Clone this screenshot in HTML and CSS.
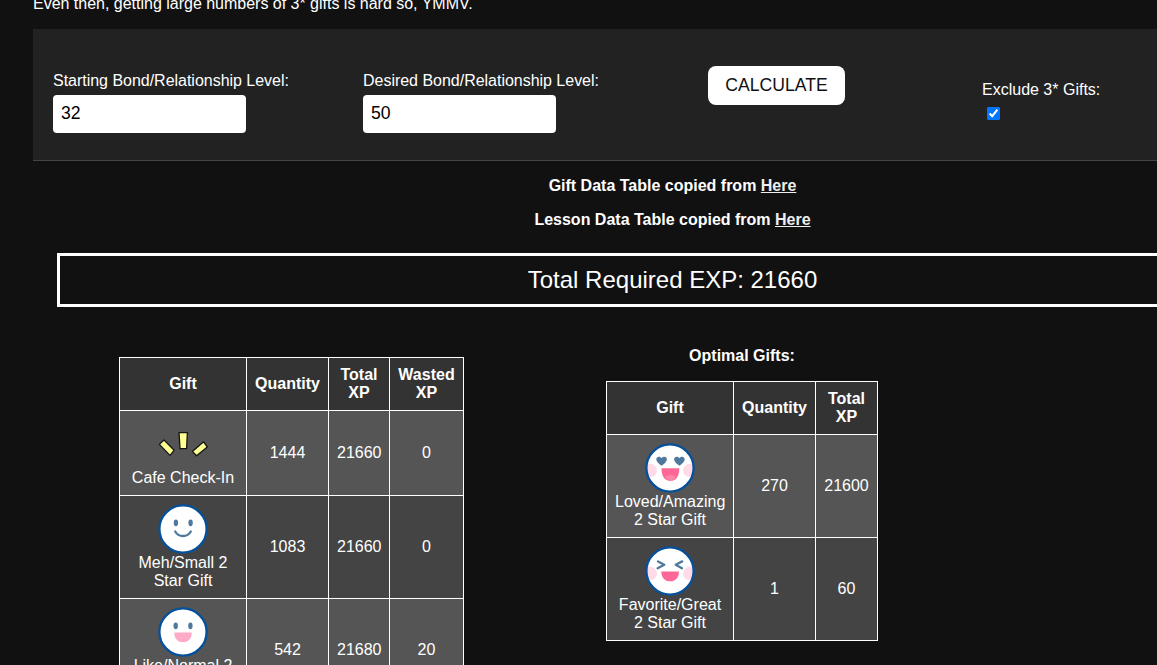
FILE: index.html
```html
<!DOCTYPE html>
<html lang="en">
<head>
<meta charset="utf-8">
<title>Bond Calculator</title>
<link rel="stylesheet" href="styles.css">
</head>
<body>
<main class="page">
  <p class="intro">Even then, getting large numbers of 3* gifts is hard so, YMMV.</p>
  <form class="controls">
    <label class="field">Starting Bond/Relationship Level:
      <input class="level" type="text" value="32">
    </label>
    <label class="field">Desired Bond/Relationship Level:
      <input class="level" type="text" value="50">
    </label>
    <button class="calculate" type="button">CALCULATE</button>
    <label class="exclude">Exclude 3* Gifts:
      <input class="check" type="checkbox" checked>
    </label>
  </form>
  <div class="sources">
    <p>Gift Data Table copied from <a href="#">Here</a></p>
    <p>Lesson Data Table copied from <a href="#">Here</a></p>
  </div>
  <div class="total">Total Required EXP: 21660</div>
  <div class="results">
    <table class="gifts gifts-all">
      <colgroup><col class="c-gift"><col class="c-qty"><col class="c-xp"><col class="c-waste"></colgroup>
      <thead><tr><th>Gift</th><th>Quantity</th><th>Total XP</th><th>Wasted XP</th></tr></thead>
      <tbody>
        <tr>
          <td><svg class="icon" viewBox="0 0 50 50"><g fill="#ffff94" stroke="#151515" stroke-width="1.3" stroke-linejoin="round"><path d="M1.4 25.4 6 21 16.2 31.2 12 36.4Z"/><path d="M21 13.6H29.4L28.6 29.6H22Z"/><path d="M34.4 32.4 45.6 22.8 49.3 28 38.6 36.8Z"/></g></svg>Cafe Check-In</td>
          <td>1444</td><td>21660</td><td>0</td>
        </tr>
        <tr>
          <td><svg class="icon" viewBox="0 0 50 50"><circle class="face" cx="25" cy="25" r="23.6"/><g class="eye"><ellipse cx="17.9" cy="18.8" rx="2.2" ry="3.4"/><ellipse cx="32.6" cy="18.8" rx="2.2" ry="3.4"/></g><path class="line" d="M17.2 27.5C20.5 33.5 29.5 33.5 32.8 27.5"/></svg>Meh/Small 2 Star Gift</td>
          <td>1083</td><td>21660</td><td>0</td>
        </tr>
        <tr>
          <td><svg class="icon" viewBox="0 0 50 50"><circle class="face" cx="25" cy="25" r="23.6"/><g class="eye"><ellipse cx="17.7" cy="18.8" rx="2.2" ry="3.4"/><ellipse cx="32.4" cy="18.8" rx="2.2" ry="3.4"/></g><path fill="#ffaac6" d="M16.3 25.5H33.7C33.7 31.5 30.5 35.2 25 35.2S16.3 31.5 16.3 25.5Z"/></svg>Like/Normal 2 Star Gift</td>
          <td>542</td><td>21680</td><td>20</td>
        </tr>
      </tbody>
    </table>
    <section class="optimal">
      <h2 class="heading">Optimal Gifts:</h2>
      <table class="gifts gifts-best">
        <colgroup><col class="c-gift"><col class="c-qty"><col class="c-xp2"></colgroup>
        <thead><tr><th>Gift</th><th>Quantity</th><th>Total XP</th></tr></thead>
        <tbody>
          <tr>
            <td><svg class="icon" viewBox="0 0 50 50"><circle cx="25" cy="25" r="23.6" fill="#fff"/><g class="cheek"><path d="M2.5 20.6C14.7 19.5 14.7 34.5 4.5 34.2Q1 27 2.5 20.6Z"/><path d="M47.5 20.6C35.3 19.5 35.3 34.5 45.5 34.2Q49 27 47.5 20.6Z"/></g><circle class="face rim" cx="25" cy="25" r="23.6"/><g class="eye"><path d="M16.6 22.8C13 20 11.3 18.4 11.3 16.2C11.3 13.2 15.3 12.8 16.6 15.2C17.9 12.8 21.9 13.2 21.9 16.2C21.9 18.4 20.2 20 16.6 22.8Z"/><path d="M34.4 22.8C30.8 20 29.1 18.4 29.1 16.2C29.1 13.2 33.1 12.8 34.4 15.2C35.7 12.8 39.7 13.2 39.7 16.2C39.7 18.4 38 20 34.4 22.8Z"/></g><path class="mouth" d="M16.5 25.2H34.3C34.3 33 31.3 37.8 25.4 37.8S16.5 33 16.5 25.2Z"/><path fill="#ff85ab" d="M20.3 34C22 31.6 28.8 31.6 30.5 34C28 38.7 22.8 38.7 20.3 34Z"/></svg>Loved/Amazing 2 Star Gift</td>
            <td>270</td><td>21600</td>
          </tr>
          <tr>
            <td><svg class="icon" viewBox="0 0 50 50"><circle cx="25" cy="25" r="23.6" fill="#fff"/><g class="cheek"><path d="M2.5 20.6C14.7 19.5 14.7 34.5 4.5 34.2Q1 27 2.5 20.6Z"/><path d="M47.5 20.6C35.3 19.5 35.3 34.5 45.5 34.2Q49 27 47.5 20.6Z"/></g><circle class="face rim" cx="25" cy="25" r="23.6"/><path class="line" d="M13 15.4 19.3 18.7 12.6 22.2M37.2 15.4 30.7 18.7 37 22.2"/><path class="mouth" d="M16.3 25.4H33.9C33.9 31.5 30.5 35.2 25.1 35.2S16.3 31.5 16.3 25.4Z"/></svg>Favorite/Great 2 Star Gift</td>
            <td>1</td><td>60</td>
          </tr>
        </tbody>
      </table>
    </section>
  </div>
</main>
</body>
</html>
```
FILE: styles.css
```css
* { box-sizing: border-box; }
html { overflow: hidden; }
body {
  margin: 0;
  height: 665px;
  overflow: hidden;
  background: #111;
  color: #fff;
  font: 16px/18px "Liberation Sans", Arial, sans-serif;
}
.page { width: 1279px; margin-left: 33px; }
.intro { margin: -5px 0 16px; letter-spacing: -0.01px; }
.controls {
  display: flex;
  align-items: flex-start;
  height: 132px;
  padding: 37px 20px 0;
  background: #222;
  border-bottom: 1px solid #444;
}
.field { width: 310px; padding-top: 6px; letter-spacing: -0.02px; }
.level {
  display: block;
  width: 193px;
  height: 38px;
  margin-top: 5px;
  padding: 0 8px 2px;
  border: 0;
  border-radius: 4px;
  background: #fff;
  color: #000;
  font: 17.6px "Liberation Sans", Arial, sans-serif;
}
.calculate {
  width: 137px;
  height: 39px;
  margin-left: 35px;
  padding: 0;
  border: 0;
  border-radius: 8px;
  background: #fff;
  color: #111;
  font: 17.6px "Liberation Sans", Arial, sans-serif;
}
.exclude { margin-left: 137px; padding-top: 15px; }
.check { display: block; width: 13px; height: 13px; margin: 8px 0 0 5px; }
.sources { padding-top: 16px; text-align: center; font-weight: bold; }
.sources p { margin: 0 0 16px; }
.sources a { color: #eee; }
.total {
  height: 54px;
  margin: 24px 24px 0;
  border: 3px solid #fff;
  font-size: 24px;
  line-height: 48px;
  text-align: center;
}
.results { display: flex; align-items: flex-start; margin: 39px 0 0 86px; }
.gifts { border-collapse: collapse; table-layout: fixed; text-align: center; }
.gifts-all { width: 345px; margin-top: 11px; }
.gifts-best { width: 272px; }
.c-gift { width: 127px; }
.c-qty { width: 82px; }
.c-xp { width: 61px; }
.c-xp2 { width: 62px; }
.c-waste { width: 74px; }
.gifts th, .gifts td { padding: 8px; border: 1px solid #fff; }
.gifts th { background: #333; }
.gifts tbody tr { background: #555; }
.gifts tbody tr:nth-child(even) { background: #444; }
.optimal { margin-left: 142px; }
.heading { margin: 1px 0 16px; font-size: 16px; line-height: 18px; text-align: center; }
.icon { display: block; width: 50px; height: 50px; margin: 0 auto; }
.face { fill: #fff; stroke: #05509a; stroke-width: 2.3; }
.rim { fill: none; }
.eye { fill: #4e799d; }
.line { fill: none; stroke: #4e799d; stroke-width: 2.3; stroke-linecap: round; stroke-linejoin: round; }
.cheek { fill: #ffdbe7; }
.mouth { fill: #ff6797; }
```
